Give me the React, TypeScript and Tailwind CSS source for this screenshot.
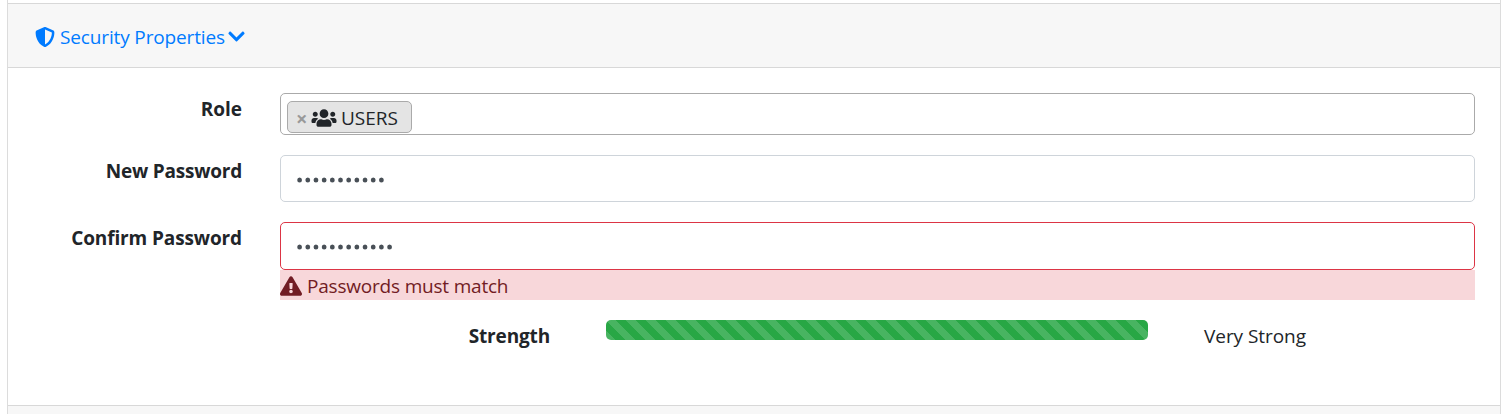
import type { ReactNode } from 'react';
import { FaShieldHalved } from 'react-icons/fa6';
import { FaChevronDown, FaExclamationTriangle, FaUsers } from 'react-icons/fa';

function Dots({ count }: { count: number }) {
  return (
    <svg className="h-[6px]" width={count * 8.2} height="6" fill="#495057" aria-label="Password">
      {Array.from({ length: count }, (_, i) => (
        <ellipse key={i} cx={2.6 + i * 8.18} cy="3" rx="2.4" ry="2.5" />
      ))}
    </svg>
  );
}

function Label({ className, children }: { className: string; children: ReactNode }) {
  return (
    <div className="flex w-[242px] shrink-0 justify-end whitespace-nowrap font-bold">
      <span className={className}>{children}</span>
    </div>
  );
}

export default function App() {
  return (
    <div className="h-[414px] overflow-hidden whitespace-nowrap bg-white pl-[7px] font-['Open_Sans','Noto_Sans',sans-serif] text-[19px] leading-[30px] text-[#212529]">
      <div className="flex h-full w-[1494px] flex-col border-x border-[#dcdcdc]">
        <div className="h-[3px] shrink-0" />
        <div className="flex h-[65px] shrink-0 items-center border-y border-[#d8d8d8] bg-[#f7f7f7] pl-[26px] text-[#007bff]">
          <FaShieldHalved className="ml-px mr-[5px] mt-[2px] h-5 w-5" />
          <span className="mt-[3px] w-[165px] tracking-[-0.14px]">Security Properties</span>
          <FaChevronDown className="ml-[2px] mt-px h-[19px] w-[19px]" />
        </div>

        <div className="-ml-2 flex h-[337px] shrink-0 flex-col pt-[25px]">
          <div className="flex h-[62px] gap-[38px]">
            <Label className="mt-[1px]">Role</Label>
            <div className="h-[42px] w-[1195px] rounded-[5px] border border-[#aaa] pl-[6px] pt-[7px]">
              <div className="flex h-8 w-[125px] items-center rounded-[5px] border border-[#aaa] bg-[#e4e4e4] pl-[8px]">
                <span className="mt-[3px] w-[11px] text-[20px] font-bold text-[#999]">×</span>
                <FaUsers className="ml-[4px] mt-px h-5 w-[26px]" />
                <span className="ml-[4px] mt-[1px]">USERS</span>
              </div>
            </div>
          </div>
          <div className="flex h-[67px] gap-[38px]">
            <Label className="mt-[1px] tracking-[-0.22px]">New Password</Label>
            <div className="flex h-[47px] w-[1195px] items-center rounded-[5px] border border-[#ced4da] pl-[16px] pt-[2px]">
              <Dots count={11} />
            </div>
          </div>
          <div className="flex h-[98px] gap-[38px]">
            <Label className="mt-[1px] tracking-[-0.12px]">Confirm Password</Label>
            <div className="w-[1195px]">
              <div className="flex h-[48px] items-center rounded-[5px] border border-[#dc3545] pl-[16px] pt-[2px]">
                <Dots count={12} />
              </div>
              <div className="flex h-[30px] items-center bg-[#f8d7da] text-[#721c24]">
                <FaExclamationTriangle className="mt-px h-[22px] w-[22px]" />
                <span className="ml-[5px] mt-[2px] tracking-[-0.2px]">Passwords must match</span>
              </div>
            </div>
          </div>
          <div className="flex">
            <div className="flex w-[550px] justify-end font-bold">
              <span className="mt-[1px] tracking-[-0.15px]">Strength</span>
            </div>
            <div className="ml-[56px] h-5 w-[542px] rounded-[5px] bg-[#28a745] bg-[linear-gradient(45deg,rgba(255,255,255,.15)_25%,transparent_25%,transparent_50%,rgba(255,255,255,.15)_50%,rgba(255,255,255,.15)_75%,transparent_75%,transparent)] bg-[length:20px_20px]" />
            <span className="ml-[56px] mt-[1px] tracking-[-0.06px]">Very Strong</span>
          </div>
        </div>
        <div className="h-[9px] shrink-0 border-t border-[#d8d8d8] bg-[#f7f7f7]" />
      </div>
    </div>
  );
}
